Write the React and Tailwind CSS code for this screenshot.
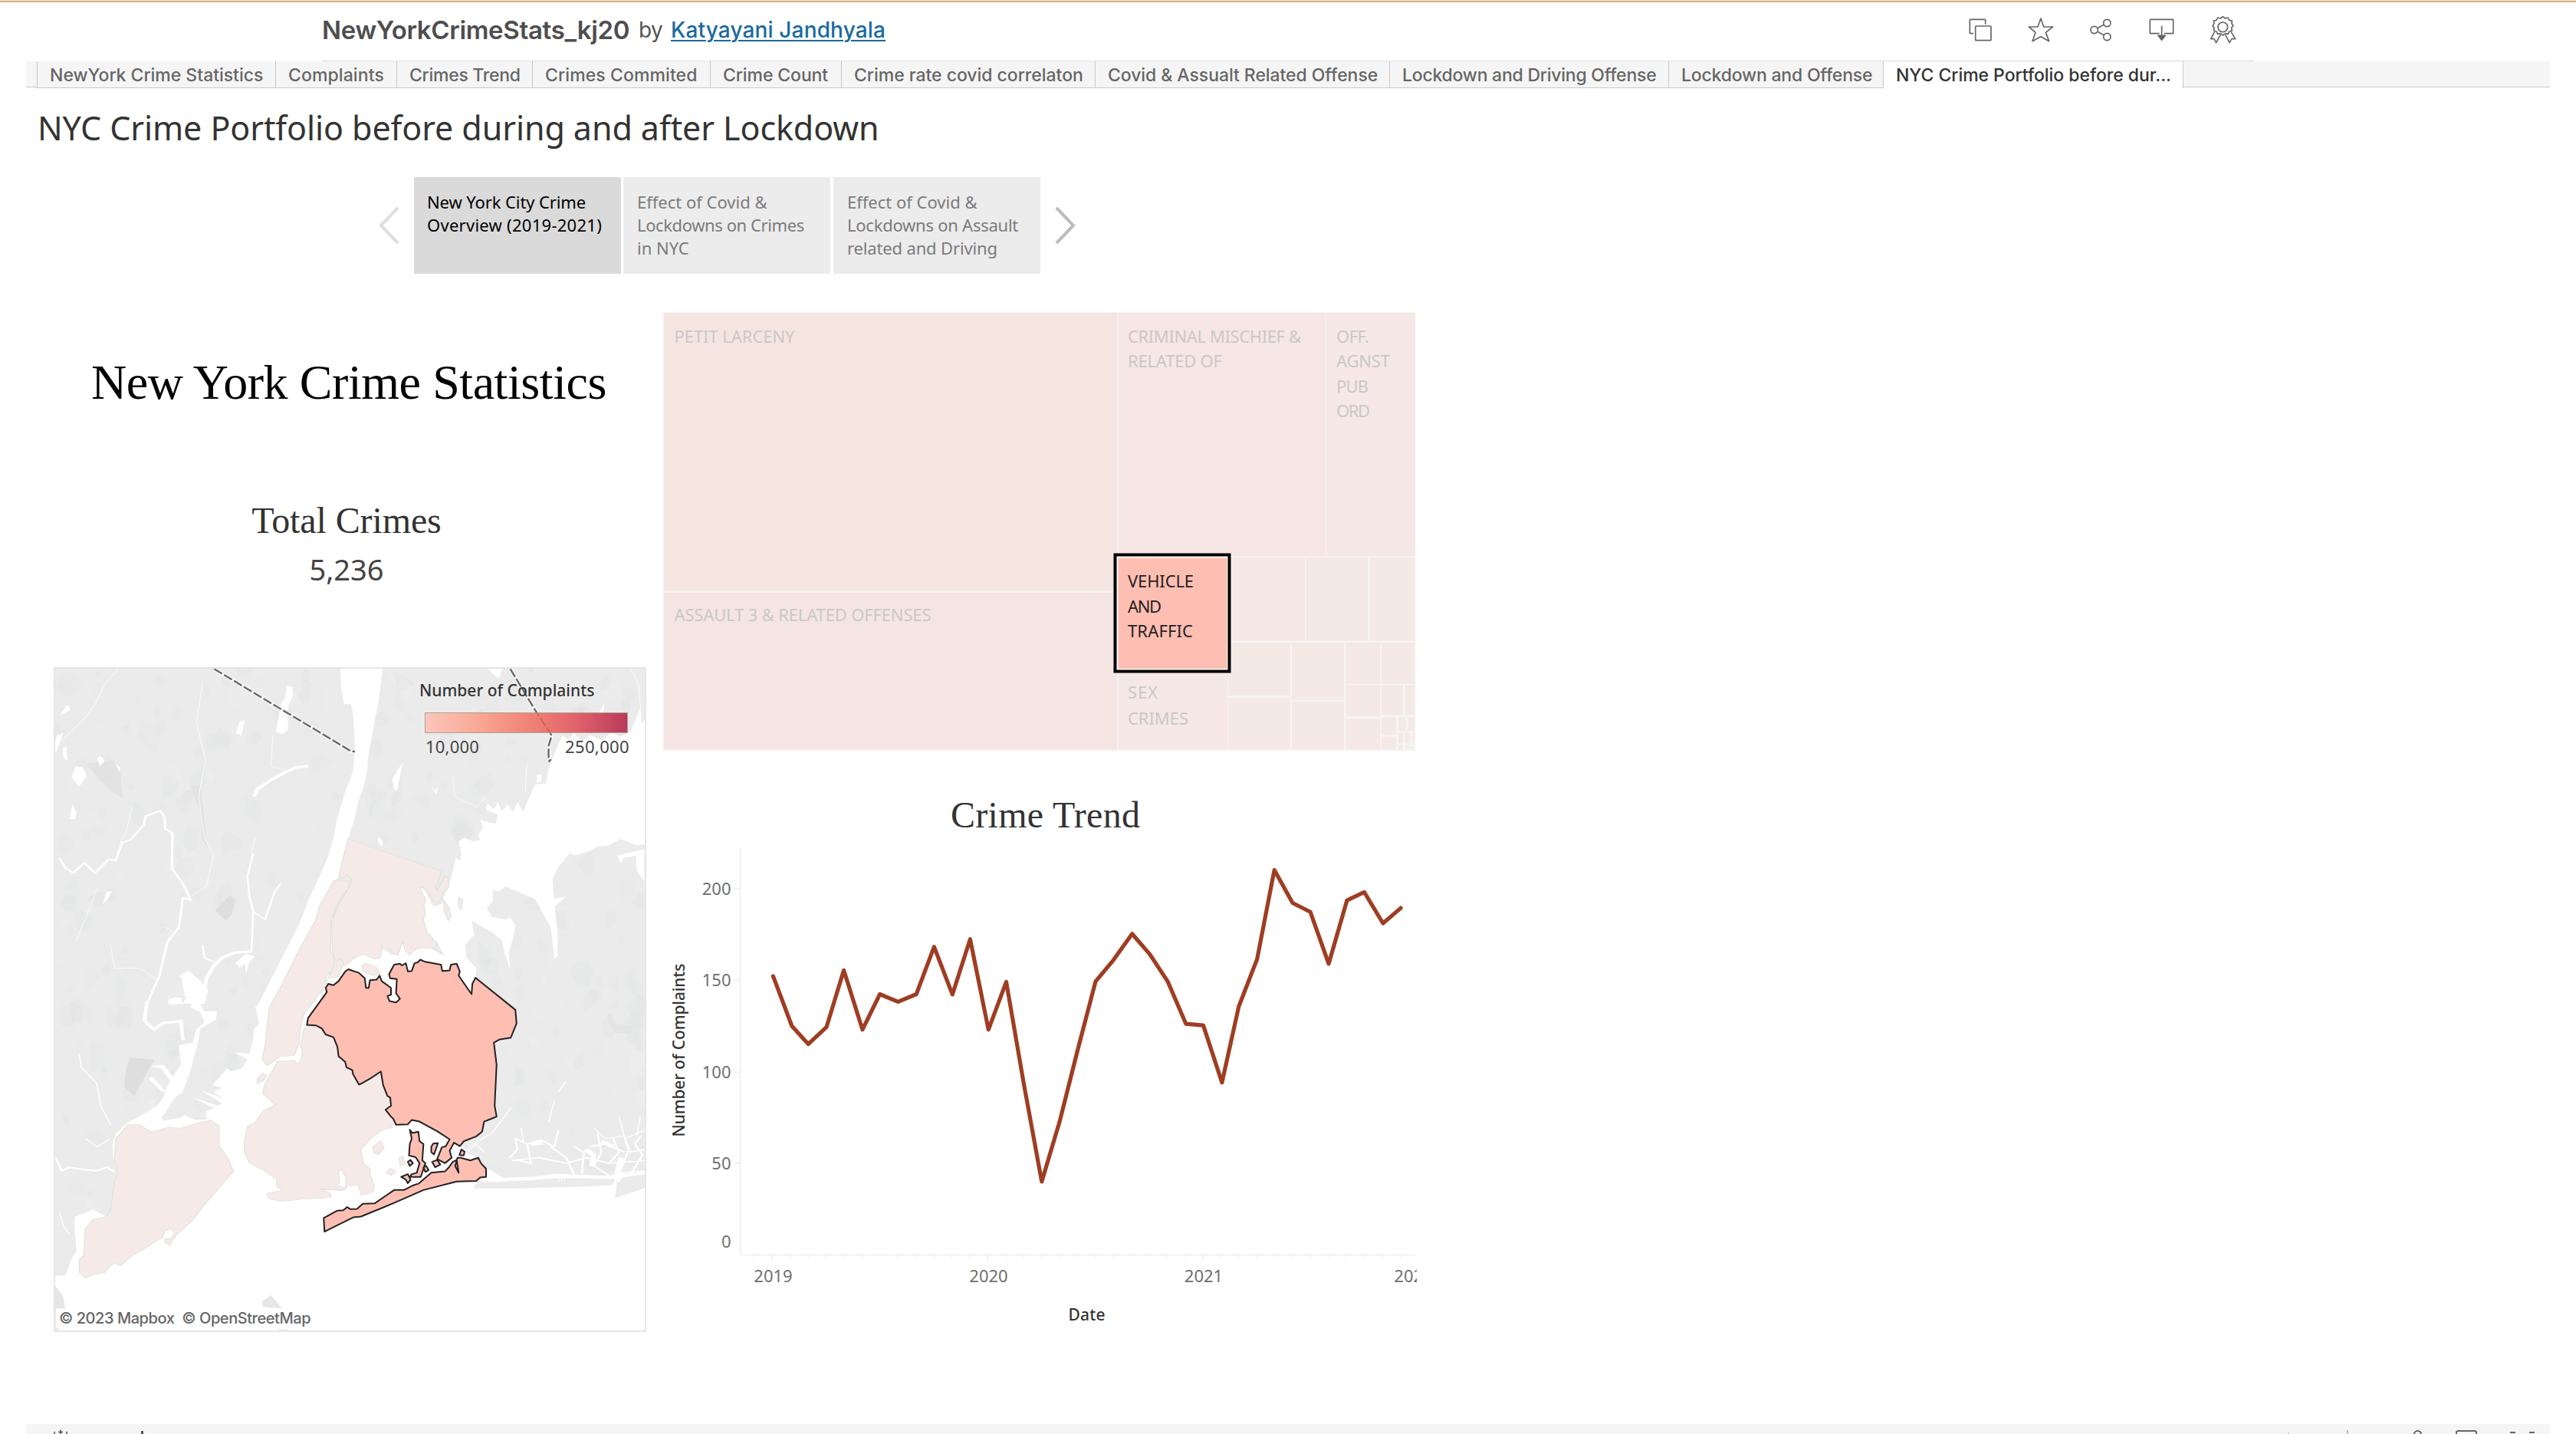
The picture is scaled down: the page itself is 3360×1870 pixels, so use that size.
import React from "react";

const TABS = [
  { label: "NewYork Crime Statistics", box: "w-[311px] tracking-[-0.02px]" },
  { label: "Complaints", box: "w-[158px] tracking-[0.1px]" },
  { label: "Crimes Trend", box: "w-[177px] tracking-[-0.28px]" },
  { label: "Crimes Commited", box: "w-[232px] tracking-[0.1px]" },
  { label: "Crime Count", box: "w-[171px] tracking-[-0.1px]" },
  { label: "Crime rate covid correlaton", box: "w-[331px] tracking-[-0.03px]" },
  { label: "Covid & Assualt Related Offense", box: "w-[384px] tracking-[-0.06px]" },
  { label: "Lockdown and Driving Offense", box: "w-[364px] tracking-[-0.24px]" },
  { label: "Lockdown and Offense", box: "w-[280px] tracking-[-0.2px]" },
];

const ICONS = [
  {
    name: "Duplicate",
    viewBox: "129 57 120 120",
    body: (
      <>
        <path d="M162 131H150Q148 131 148 129V78Q148 76 150 76H207Q209 76 209 78V95" />
        <rect x="170" y="102" width="61" height="56" rx="3" />
      </>
    ),
  },
  {
    name: "Favorite",
    viewBox: "366 57 120 120",
    body: <path d="M426 72L437 105H473L445 127L458 161L426 143L393 161L405 127L379 105H414Z" />,
  },
  {
    name: "Share",
    viewBox: "603 57 120 120",
    body: (
      <>
        <circle cx="635" cy="117" r="14" />
        <circle cx="685" cy="90" r="14" />
        <circle cx="685" cy="144" r="14" />
        <path d="M648 110L672 97M648 124L672 137" />
      </>
    ),
  },
  {
    name: "Download",
    viewBox: "840 57 120 120",
    body: (
      <>
        <path d="M890 131H855Q853 131 853 129V78Q853 76 855 76H942Q944 76 944 78V129Q944 131 942 131H909" />
        <path d="M899 101V142" />
        <path d="M885 139H913L899 157Z" fill="#666" />
      </>
    ),
  },
  {
    name: "Award",
    viewBox: "1077 57 120 120",
    body: (
      <>
        <path d="M1138 65L1147 72L1158 69L1163 79L1174 81L1173 92L1179 101L1172 108L1174 120L1163 123L1159 133L1148 131L1138 138L1129 131L1118 133L1113 123L1103 120L1104 108L1098 101L1104 92L1102 81L1113 79L1118 69L1129 72Z" />
        <circle cx="1138" cy="106" r="19" />
        <path d="M1106 124L1091 152L1104 152L1112 167L1129 136M1170 124L1187 152L1173 152L1164 167L1148 136" />
      </>
    ),
  },
];

function Header() {
  return (
    <header className="ml-[420px] flex h-[77px] w-[2520px] justify-between border-b border-[#dcdcdc] font-['Inter',sans-serif]">
      <div className="flex pt-[14px] leading-[44px] whitespace-nowrap text-[#555]">
        <h1 className="w-[413px] text-[33px] font-semibold tracking-[-0.32px] text-[#4e4e4e]">NewYorkCrimeStats_kj20</h1>
        <span className="w-[42px] text-[28px] tracking-[-0.5px]">by</span>
        <a className="text-[28px] font-medium tracking-[0.15px] text-[#1b6a9f] underline decoration-2 underline-offset-[3px]">
          Katyayani Jandhyala
        </a>
      </div>
      <div className="mr-[21px] flex gap-[39px] pt-[16px]">
        {ICONS.map((icon) => (
          <svg key={icon.name} viewBox={icon.viewBox} className="size-10" fill="none" stroke="#666" strokeWidth="5" strokeLinejoin="round">
            {icon.body}
          </svg>
        ))}
      </div>
    </header>
  );
}

function TabStrip() {
  return (
    <nav className="ml-[34px] flex h-[35px] w-[3292px] font-['Inter',sans-serif] text-[23px] leading-[36px] font-medium whitespace-nowrap text-[#666]">
      <div className="h-[34px] w-[14px] border-b border-[#c8c8c8] bg-[#f5f5f5]" />
      {TABS.map((tab) => (
        <div key={tab.label} className={`shrink-0 border-b border-l border-[#c8c8c8] bg-[#f5f5f5] pl-[16px] ${tab.box}`}>
          {tab.label}
        </div>
      ))}
      <div className="w-[392px] shrink-0 border-x border-[#c8c8c8] pl-[16px] tracking-[-0.04px] text-[#333]">
        NYC Crime Portfolio before dur...
      </div>
      <div className="h-[34px] flex-1 border-b border-[#c8c8c8] bg-[#f5f5f5]" />
    </nav>
  );
}

function StoryNav() {
  return (
    <div className="mt-[41px] ml-[493px] flex h-[126px] items-center gap-[3px] text-[22px] leading-[30px] whitespace-nowrap text-[#7b7b7b]">
      <svg className="mr-[14px] h-[50px] w-[30px]" viewBox="0 0 30 50" fill="none" stroke="#dedede" strokeWidth="4">
        <path d="M26 2L4 25L26 48" />
      </svg>
      <div className="h-full w-[270px] bg-[#dadada] pt-[17px] pl-[17px] text-black">
        <p className="tracking-[-0.1px]">New York City Crime</p>
        <p className="tracking-[0.27px]">Overview (2019-2021)</p>
      </div>
      <div className="h-full w-[270px] bg-[#ececec] pt-[17px] pl-[18px]">
        <p>Effect of Covid &amp;</p>
        <p className="tracking-[-0.4px]">Lockdowns on Crimes</p>
        <p>in NYC</p>
      </div>
      <div className="ml-px h-full w-[270px] bg-[#ececec] pt-[17px] pl-[18px]">
        <p>Effect of Covid &amp;</p>
        <p className="tracking-[-0.25px]">Lockdowns on Assault</p>
        <p className="tracking-[-0.15px]">related and Driving</p>
      </div>
      <svg className="ml-[14px] h-[50px] w-[30px]" viewBox="0 0 30 50" fill="none" stroke="#bdbdbd" strokeWidth="4">
        <path d="M4 2L26 25L4 48" />
      </svg>
    </div>
  );
}

/* Deterministic land-cover patches for the base map. */
function makePatches(count) {
  let seed = 11;
  const rnd = () => {
    seed = (seed * 16807) % 2147483647;
    return seed / 2147483647;
  };
  return Array.from({ length: count }, () => {
    const x = rnd() * 772;
    const y = rnd() * 720;
    const r = 4 + rnd() * 13;
    const pts = [0, 1, 2, 3, 4, 5].map((k) => {
      const a = (k * Math.PI) / 3;
      const d = r * (0.4 + rnd() * 0.8);
      return `${(x + Math.cos(a) * d).toFixed(1)},${(y + Math.sin(a) * d * 1.2).toFixed(1)}`;
    });
    return { pts: pts.join(" "), tone: rnd() > 0.35 ? "#e0e2e2" : "#efefef", alpha: 0.1 + rnd() * 0.3 };
  });
}
const PATCHES = makePatches(520);

const NORTH = "translate(-10 -12) scale(0.5102 0.33333)";
const SOUTH = "translate(-10 328) scale(0.5102 0.35714)";

const QUEENS =
  "M773 182L800 195L815 215L818 250L825 250L828 222L845 220L853 205L858 225L882 250L882 275L873 280L878 298L895 303L905 290L895 270L897 218L880 215L877 200L890 165L905 162L910 168L920 160L925 190L935 188L942 160L950 157L957 147L970 155L1010 165L1013 188L1032 186L1035 165L1050 162L1058 190L1055 205L1088 273L1090 235L1098 213L1200 330L1203 380L1188 432L1160 438L1145 450L1152 530L1147 680L1152 720L1138 728L1120 738L1115 775L1100 792L1068 810L1058 828L1043 815L1032 845L1037 870L1020 890L1000 875L1012 832L1022 828L1032 803L1000 773L955 738L935 732L925 748L895 750L888 728L882 720L868 695L882 680L880 650L873 645L862 605L856 555L830 580L805 600L800 603L785 565L783 550L768 540L765 520L748 500L745 465L735 430L715 420L705 398L690 387L667 385L670 360L718 265L715 250L722 235L735 240L748 225L765 190Z";
const ROCKAWAY =
  "M712 1140L710 1090L745 1063L760 1062L770 1050L778 1058L795 1057L810 1038L840 1037L890 988L915 988L940 970L952 965L985 925L1020 920L1030 905L1040 885L1050 878L1055 925L1046 900L1052 870L1060 870L1085 880L1105 870L1112 890L1125 910L1125 940L1110 942L1100 955L1050 957L965 988L890 1035L805 1085L785 1088Z";
const BAY_ISLANDS =
  "M930 768L937 780L952 775L955 810L965 820L962 880L970 890L958 940L930 940L935 930L948 925L955 890L945 868L928 862L930 820L935 800ZM925 885L932 878L938 890L930 900ZM908 940L925 930L932 950L925 963L920 950ZM987 885L1000 878L1008 895L995 905ZM985 830L990 818L1002 817L992 858L985 850ZM965 905L972 900L978 915L970 922ZM1057 860L1062 840L1070 848L1068 862Z";
const BOROUGHS = [
  "M748 -145L775 -140L772 -112L745 -56L728 0L728 112L738 145L735 185L715 210L720 225L690 290L660 345L650 400L648 450L635 497L600 500L565 535L552 510L560 460L568 350L570 325L600 245L640 130L690 0L700 -52L728 -121L735 -142Z",
  "M772 -294L1010 -177L1006 -150L995 -120L1000 -108L1012 -135L1020 -160L1028 -150L1030 -120L1012 -90L1005 -60L990 -68L975 -110L960 -120L957 -110L972 -70L966 -56L970 -20L965 0L975 50L985 60L990 75L1000 85L993 105L1018 130L985 105L945 107L930 130L918 112L912 80L900 130L882 122L880 110L860 108L858 95L855 140L840 145L810 125L790 138L765 170L740 150L732 110L730 10L750 -60L778 -125L780 -148L770 -162L760 -150L748 -160Z",
  "M667 387L705 398L715 420L735 430L750 500L785 560L800 603L856 555L865 610L880 660L868 695L888 735L885 760L858 770L830 800L805 840L812 890L828 910L830 935L840 975L835 997L805 1007L798 970L770 975L765 988L704 985L728 1000L728 1015L650 1022L600 1030L570 1020L565 1000L605 990L590 975L590 950L555 915L520 890L507 850L507 810L515 755L535 740L555 700L585 675L553 635L560 600L592 518L635 515L645 528L652 510L656 480L650 460L660 400Z",
  "M210 748L240 750L262 770L275 775L310 760L345 762L385 745L420 732L443 752L442 825L465 870L480 920L440 985L400 1050L375 1100L335 1150L315 1190L305 1180L303 1165L320 1165L328 1145L320 1128L303 1140L298 1160L260 1195L225 1225L210 1240L190 1265L175 1255L160 1270L150 1290L120 1297L100 1310L85 1290L85 1240L97 1225L100 1130L120 1095L155 1085L165 1060L175 960L185 920L175 880L178 800Z",
  "M808 168L818 160L845 175L855 200L835 205L810 190ZM738 160L752 143L762 160L745 210L722 215ZM540 580L555 560L565 570L555 590L540 600ZM1016 -72L1030 -45L1036 -10L1028 5L1018 -30ZM1055 -82L1066 -70L1060 -35L1054 -50ZM835 830L855 808L865 835L850 858L838 855ZM868 925L880 908L895 920L882 935ZM903 870L912 862L918 895L905 900Z",
];

function CrimeMap() {
  return (
    <div className="relative mt-[102px] h-[867px] w-[773px] border-2 border-[#e6e6e6] bg-white">
      <svg className="block size-full" viewBox="2 1 769 863" preserveAspectRatio="none">
        <defs>
          <linearGradient id="ramp">
            <stop offset="0" stopColor="#ffbeb2" />
            <stop offset="0.25" stopColor="#fc9b84" />
            <stop offset="0.5" stopColor="#f26f5c" />
            <stop offset="0.75" stopColor="#e04450" />
            <stop offset="1" stopColor="#ae123a" />
          </linearGradient>
        </defs>
        <rect width="772" height="866" fill="#ebebeb" />
        {PATCHES.map((p, i) => (
          <polygon key={i} points={p.pts} fill={p.tone} opacity={p.alpha} />
        ))}
        {/* darker parks */}
        <g transform={NORTH} fill="#dedede">
          <path d="M470 925L485 945L475 1000L460 1025L432 985Z" />
          <path d="M100 410L170 400L190 430L195 545L160 510L130 460Z" opacity="0.6" />
          <path d="M370 500L395 490L400 560L410 720L425 760L400 710L395 600Z" opacity="0.6" />
        </g>
        <g transform={SOUTH} fill="#dedede">
          <path d="M215 505L277 512L225 645L200 610L205 545Z" />
          <path d="M1432 350L1447 345L1455 380L1500 390L1495 418L1450 412Z" fill="#e3e5e5" />
        </g>

        {/* water, northern half */}
        <g transform={NORTH} fill="#fff">
          <path d="M752 30L862 30L850 170L838 260L824 380L822 430L812 500L798 560L790 620L772 705L750 850L728 890L700 965L690 1020L650 1140L600 1290L582 1360L540 1360L570 1270L600 1180L625 1120L652 1020L675 930L700 850L722 770L735 700L745 620L765 520L785 440L790 360L788 290L785 215L780 178L762 178L755 120Z" />
          <path d="M1540 230L1522 250L1520 190L1505 245L1495 285L1470 305L1445 292L1420 320L1390 298L1370 325L1350 290L1335 315L1320 300L1300 370L1285 430L1278 488L1250 492L1262 450L1245 510L1230 560L1220 600L1205 560L1195 600L1180 570L1165 598L1155 560L1145 590L1128 565L1125 590L1155 610L1150 645L1128 640L1110 630L1118 660L1105 690L1110 710L1090 715L1070 700L1055 715L1062 760L1060 790L1047 780L1040 830L1030 890L1020 920L1012 960L990 970L970 910L958 893L965 960L966 1020L975 1080L1000 1110L1018 1160L980 1130L950 1130L930 1160L912 1105L900 1160L880 1155L857 1122L850 1175L810 1155L770 1190L750 1240L715 1270L700 1360L1100 1360L1098 1250L1100 1210L1075 1170L1072 1120L1095 1080L1088 1025L1110 1045L1140 1070L1165 1100L1172 1150L1187 1215L1183 1150L1195 1090L1200 1040L1185 1010L1175 1020L1140 1010L1127 975L1142 950L1142 905L1160 908L1175 890L1250 940L1290 1050L1300 1175L1308 1160L1308 1070L1300 970L1330 930L1298 940L1295 860L1310 815L1340 760L1350 770L1390 752L1410 735L1440 730L1468 705L1510 730L1540 725Z" />
          <path d="M1460 770L1530 745L1530 870L1510 830L1508 770L1475 780L1470 800ZM1410 220L1428 175L1425 220ZM1130 40L1165 40L1160 75L1150 70ZM1255 455L1268 450L1265 480L1255 485ZM850 695L862 715L858 735L848 715Z" />
          <path d="M600 180L612 150L615 105L630 110L632 145L620 180L618 280L605 295L588 285ZM486 290L495 245L508 240L500 300ZM75 420L95 425L103 460L85 500L66 465ZM28 300L45 290L35 330L25 370L22 330ZM42 350L52 345L55 400L45 390ZM35 220L55 180L62 200L45 215ZM130 390L140 380L150 400L138 420ZM178 412L190 425L188 445ZM68 570L78 605L75 628L60 628ZM145 960L155 910L168 910L158 940ZM885 470L912 405L898 515L890 512ZM985 500L995 515L1003 500L998 532Z" />
          <path d="M485 1190L510 1155L535 1165L520 1185L512 1230L508 1195L495 1210ZM340 1240L365 1220L395 1260L415 1300L400 1350L350 1350L370 1290ZM315 1330L345 1325L350 1350L312 1350Z" />
        </g>
        <g transform={NORTH} fill="none" stroke="#fff" strokeLinejoin="round">
          <path strokeWidth="6" d="M35 780L50 820L70 838L98 798L125 838L160 785L178 790L195 718L215 710L250 650L255 615L292 595L303 620L305 665L323 682L322 820L350 880L370 945L350 935L340 1050L310 1110L290 1240L258 1350" />
          <path strokeWidth="5" d="M530 760L515 850L520 930L530 990L560 1020L585 910L600 880M530 990L525 1150M400 1120L405 1170L435 1190" />
          <path strokeWidth="10" d="M670 420L640 425L610 445L575 475L540 510L532 540M525 1145L480 1150L450 1170L430 1200L410 1250L400 1350" />
          <path strokeWidth="2" opacity="0.8" d="M185 40L150 100L125 180L95 240L60 290L35 330M400 90L385 250L408 400L390 540L405 700L428 770L410 890L370 930M220 580L205 680L190 720M580 300L575 420L620 440M1040 460L1045 540L1100 580L1125 540M1230 400L1225 520M1495 40L1515 100L1520 190M130 900L100 1020L75 1110M165 1120L175 1210L240 1210L285 1260M535 700L525 760M300 1050L320 1060L310 1110" />
        </g>

        {/* water, southern half */}
        <g transform={SOUTH} fill="#fff">
          <path d="M655 -5L625 80L600 150L575 250L550 300L535 320L545 380L530 405L530 440L520 490L480 485L500 500L515 510L500 545L475 555L462 545L445 575L425 605L450 615L428 630L455 655L395 622L450 672L440 680L375 650L430 690L408 700L412 730L380 732L355 715L340 725L300 735L295 725L330 650L350 630L370 550L380 490L385 470L395 400L435 365L437 335L405 335L395 310L412 290L400 240L375 260L370 200L345 205L355 280L375 290L370 320L395 340L405 375L385 400L375 450L340 460L345 530L330 560L310 610L300 650L285 680L245 715L210 740L180 780L172 810L170 830L172 870L185 920L165 1060L155 1085L120 1060L75 1085L72 1120L78 1210L65 1240L50 1300L22 1300L22 1335L45 1380L50 1430L30 1510L1540 1510L1540 975L1455 1018L1460 960L1440 940L1300 935L1250 950L1170 945L1125 905L1105 870L1070 850L1062 828L900 700L760 480L700 260L770 170L745 -5Z" />
          <path d="M315 295L330 285L345 290L335 310L322 312Z" />
          <path d="M268 535L300 530L325 575L318 590L295 545ZM262 580L272 575L305 625L298 632Z" />
          <path d="M1540 930L1480 925L1465 960L1440 945L1455 925L1540 915Z" />
        </g>
        <g transform={SOUTH}>
          <path d="M1092 982L1105 955L1150 958L1300 945L1455 945L1448 970L1380 975L1200 982Z" fill="#ebebeb" />
          <path d="M1453 1018L1480 940L1530 935L1530 975Z" fill="#ebebeb" />
          <path d="M552 1395L575 1372L605 1422L555 1415ZM22 1335L40 1370L50 1425L22 1425Z" fill="#e6e6e6" />
          <path d="M595 1496L620 1496L620 1500L595 1500Z" fill="#e6e6e6" />
          <g fill="none" stroke="#fff" strokeLinejoin="round">
            <path strokeWidth="9" d="M258 300L252 370L275 402L300 378L345 372L350 440" />
            <path strokeWidth="6" d="M25 870L40 918L60 905L90 912L130 918L155 905L175 920" />
            <path strokeWidth="12" d="M1110 925L1170 950L1250 945L1300 935L1440 942L1530 925" />
            <path strokeWidth="5" d="M1185 870L1205 840L1200 800L1230 820L1265 805L1300 830L1310 770M1190 880L1260 870L1330 890L1380 870L1440 890L1530 880M1230 820L1240 890L1210 880M1290 830L1330 870L1350 930M1350 830L1375 850L1370 930M1410 780L1420 850L1400 900L1440 935M1450 800L1465 850L1440 890M1480 800L1490 840L1465 930M1520 790L1505 820L1525 860L1495 930M1490 850L1530 840M1390 830L1430 820L1480 850" />
            <path strokeWidth="3" d="M1520 720L1510 790M1465 720L1480 800L1530 770M1400 760L1430 800L1480 790M1215 760L1220 810M1060 830L1080 845L1100 820L1120 850" />
            <path strokeWidth="14" d="M1380 840L1400 860L1395 900M1240 820L1270 815M1470 870L1460 930M1420 810L1450 830" />
            <path strokeWidth="3" d="M85 490L90 540L130 600L140 680L165 750M100 800L130 830L165 800M1285 740L1300 660M1080 830L1140 780L1190 685M1330 590L1310 630M35 1070L45 1120L60 1150" />
            <path strokeWidth="2" d="M1312 930V958M1318 930V958M1325 930V955" />
          </g>
          <g fill="#f5eae8" stroke="#dcdfdf" strokeWidth="2">
            {BOROUGHS.map((d) => (
              <path key={d.slice(0, 12)} d={d} />
            ))}
          </g>
          <path d="M748 920L755 912L768 945L765 980L740 970L750 965ZM704 985L760 990" fill="#fff" stroke="#dcdfdf" strokeWidth="2" />
          <g fill="#ffbeb2" stroke="#222" strokeWidth="2" strokeLinejoin="round">
            <path vectorEffect="non-scaling-stroke" d={QUEENS} />
            <path vectorEffect="non-scaling-stroke" d={ROCKAWAY} />
            <path vectorEffect="non-scaling-stroke" d={BAY_ISLANDS} />
          </g>
        </g>

        {/* state borders */}
        <g transform={NORTH} fill="none">
          <path vectorEffect="non-scaling-stroke" stroke="#f6f6f6" strokeWidth="5" d="M430 40L780 362L790 363M1187 40L1250 200L1293 300L1285 340L1288 400" />
          <path vectorEffect="non-scaling-stroke" stroke="#666" strokeWidth="2.3" strokeDasharray="12 3" d="M430 40L780 362L790 363M1187 40L1250 200L1293 300L1285 340L1285 385L1290 395L1285 403" />
        </g>
        <rect x="484.5" y="58.5" width="264" height="26" fill="url(#ramp)" fillOpacity="0.82" stroke="#a9a391" />
      </svg>

      <div className="absolute top-[12px] left-[475px] w-[274px] text-[21px] leading-[32px] whitespace-nowrap text-[#333]">
        <div className="font-medium">Number of Complaints</div>
        <div className="mt-[41px] flex justify-between pl-[8px] text-[22px] text-[#444]">
          <span className="tracking-[0.2px]">10,000</span>
          <span className="tracking-[0.37px]">250,000</span>
        </div>
      </div>
      <div className="absolute bottom-[3px] left-px flex h-[26px] w-[336px] gap-[10px] bg-white/80 pl-[4px] font-['Inter',sans-serif] text-[20px] leading-[26px] font-medium tracking-[-0.45px] whitespace-nowrap text-[#666]">
        <span>© 2023 Mapbox</span>
        <span>© OpenStreetMap</span>
      </div>
    </div>
  );
}

const ROSE = "#f6e6e5";
const SAND = "#f5e9e5";
const TILES = [
  [2, 1, 591, 362.5, "#f5e5e1"],
  [2, 366, 591, 204.5, "#f5e5e2"],
  [594.5, 1, 270, 317.5, ROSE],
  [865.5, 1, 116.5, 317.5, "#f6e8e6"],
  [594.5, 470, 143, 100.5, "#f6e8e7"],
  [742, 320, 96, 108.5, "#f6e8e6"],
  [839.5, 320, 81, 108.5, SAND],
  [922.5, 320, 59, 108.5, SAND],
  [738.3, 430.7, 81, 69.5, SAND],
  [738.3, 503, 81, 67.5, SAND],
  [821, 430.7, 68, 75, SAND],
  [821, 508.3, 68, 62.2, SAND],
  [891.3, 430.7, 45, 54, SAND],
  [891.3, 486.3, 45, 41, SAND],
  [891.3, 530.3, 45, 40.2, SAND],
  [938, 430.7, 43, 54, SAND],
  [938, 486.3, 28, 39.3, SAND],
  [969, 486.3, 12, 39.3, SAND],
  [938, 528.3, 19, 23, SAND],
  [938, 553.7, 19, 16.8, SAND],
  [960, 528.3, 10, 18, SAND],
  [972.3, 528.3, 8.7, 18, SAND],
  [960, 548.3, 6, 14.3, SAND],
  [968.7, 548.3, 6.3, 14.3, SAND],
  [977.7, 548.3, 3.3, 14.3, SAND],
  [960, 564.3, 6, 6.2, SAND],
  [969, 564.3, 5, 5, SAND],
  [976, 567, 4, 2, SAND],
];

const TILE_TEXT = [
  [15.5, 39.5, "PETIT LARCENY", 157],
  [15.5, 403, "ASSAULT 3 & RELATED OFFENSES", 335],
  [607, 39.5, "CRIMINAL MISCHIEF &", 226],
  [607, 72, "RELATED OF", 123],
  [879, 39.5, "OFF.", 43],
  [879, 72, "AGNST", 70],
  [879, 105, "PUB", 42],
  [879, 137, "ORD", 44],
  [607, 504, "SEX", 39],
  [607, 537.5, "CRIMES", 79],
];

function Treemap() {
  return (
    <svg className="block h-[573px] w-[984px] font-['Noto_Sans',sans-serif] text-[22px]" viewBox="0 0 984 573">
      <rect y="0" width="982.5" height="572.5" fill="#f5f5f5" />
      {TILES.map(([x, y, w, h, fill]) => (
        <rect key={`${x}-${y}`} x={x} y={y} width={w} height={h} fill={fill} />
      ))}
      <g fill="#c8c8c8">
        {TILE_TEXT.map(([x, y, text, w]) => (
          <text key={text} x={x} y={y} textLength={w}>
            {text}
          </text>
        ))}
      </g>
      <rect x="590.5" y="316.5" width="149" height="152" fill="#fff" stroke="#000" strokeWidth="4" />
      <rect x="594.5" y="320.5" width="142" height="144.5" fill="#ffbeb2" />
      <g fill="#222">
        <text x="607" y="358.5" textLength="86">VEHICLE</text>
        <text x="607" y="391.5" textLength="44">AND</text>
        <text x="607" y="423.5" textLength="85">TRAFFIC</text>
      </g>
    </svg>
  );
}

/* Monthly vertices on the plot's own grid, 2019-01 to 2021-12. */
const TREND =
  "246,557 284,695 317,745 354,698 389,541 427,705 462,607 499,628 536,607 572,476 609,608 645,455 682,705 718,573 753,850 790,1125 826,960 862,765 899,572 935,513 973,440 1009,497 1045,572 1082,689 1117,693 1155,851 1189,641 1226,510 1261,264 1298,355 1334,380 1371,523 1408,348 1443,325 1481,411 1517,369";
const POINTS = TREND.split(" ")
  .map((p) => p.split(",").map(Number))
  .map(([x, y]) => `${(x * 0.6441 - 14).toFixed(1)},${(y * 0.47194 + 30).toFixed(1)}`)
  .join(" ");

const Y_TICKS = [["200", 186.5, 179], ["150", 305.5, 298], ["100", 425.5, 418], ["50", 544.5, 537], ["0", 647, null]];
const X_TICKS = [["2019", 144.5], ["2020", 425.5], ["2021", 706], ["2022", 979.5]];

function TrendChart() {
  return (
    <section className="h-[770px] w-[984px]">
      <svg className="block h-[770px] w-[984px] font-['Noto_Sans',sans-serif] text-[22px]" viewBox="0 0 984 770" overflow="hidden">
        <text x="376" y="99" textLength="247" fill="#333" className="font-['Liberation_Serif',serif] text-[48px]">
          Crime Trend
        </text>
        <g stroke="#ededed" strokeWidth="1.5" fill="none">
          <path d="M101.5 126V656.5H984" />
          {Y_TICKS.filter((t) => t[2]).map(([label, , y]) => (
            <path key={label} d={`M93 ${y}H101`} />
          ))}
          {Array.from({ length: 37 }, (_, i) => (
            <path key={i} d={`M${(120 + i * 23.4).toFixed(1)} 657V${i % 12 === 1 ? 664 : 659.5}`} />
          ))}
        </g>
        <g fill="#6e6e6e">
          {Y_TICKS.map(([label, y]) => (
            <text key={label} x="89.5" y={y} textAnchor="end">
              {label}
            </text>
          ))}
          {X_TICKS.map(([label, x]) => (
            <text key={label} x={x} y="692" textAnchor="middle">
              {label}
            </text>
          ))}
        </g>
        <g fill="#333" className="text-[21px] font-medium">
          <text x="529.5" y="741.5" textLength="48">Date</text>
          <text transform="translate(29 502.5) rotate(-90)" textLength="226">
            Number of Complaints
          </text>
        </g>
        <polyline points={POINTS} fill="none" stroke="#9f3d23" strokeWidth="5.2" strokeLinejoin="round" strokeLinecap="round" />
      </svg>
    </section>
  );
}

function VizToolbar() {
  return (
    <footer className="ml-[34px] flex h-[13px] w-[3292px] shrink-0 justify-between overflow-hidden bg-[#f5f5f5]">
      <svg className="h-[13px] w-[200px]" viewBox="34 1857 200 13" fill="none" stroke="#555" strokeWidth="1.6">
        <path d="M71 1867V1870M79 1864.5V1870M76 1867.5H82M87 1867V1870" />
        <path d="M185.5 1866V1870" strokeWidth="3" />
      </svg>
      <svg className="h-[13px] w-[360px]" viewBox="2966 1857 360 13" fill="none" stroke="#666" strokeWidth="2">
        <path d="M2984 1869H2986" stroke="#ccc" />
        <path d="M3062 1865V1870" stroke="#bbb" />
        <circle cx="3153.5" cy="1870.5" r="4.6" />
        <path d="M3204 1871V1868Q3204 1866 3206 1866H3228Q3230 1866 3230 1868V1871" />
        <path d="M3274 1868H3281M3299 1868H3306" />
      </svg>
    </footer>
  );
}

export default function App() {
  return (
    <div className="flex h-[1870px] w-[3360px] flex-col overflow-hidden bg-white font-['Noto_Sans',sans-serif]">
      <div className="h-[3px] shrink-0 border-t border-[#ffdfb5] bg-[#d2b48c]" />
      <Header />
      <TabStrip />
      <main className="flex-1">
        <h2 className="mt-[22px] ml-[49px] h-[60px] text-[43px] leading-[60px] tracking-[-0.08px] whitespace-nowrap text-[#333]">
          NYC Crime Portfolio before during and after Lockdown
        </h2>
        <div className="-mt-[7px]">
          <StoryNav />
        </div>
        <div className="mt-[50px] flex">
          <div className="ml-[70px] w-[794px]">
            <div className="flex w-[764px] flex-col items-center pt-[52px] whitespace-nowrap">
              <h3 className="pl-[6px] font-['Liberation_Serif',serif] text-[64px] leading-[80px] tracking-[-0.43px] text-black">
                New York Crime Statistics
              </h3>
              <p className="mt-[110px] font-['Liberation_Serif',serif] text-[48px] leading-[60px] tracking-[-0.1px] text-[#333]">
                Total Crimes
              </p>
              <p className="mt-[7px] text-[38px] leading-[52px] text-[#444]">5,236</p>
            </div>
            <CrimeMap />
          </div>
          <div className="w-[984px]">
            <Treemap />
            <TrendChart />
          </div>
        </div>
      </main>
      <VizToolbar />
    </div>
  );
}
